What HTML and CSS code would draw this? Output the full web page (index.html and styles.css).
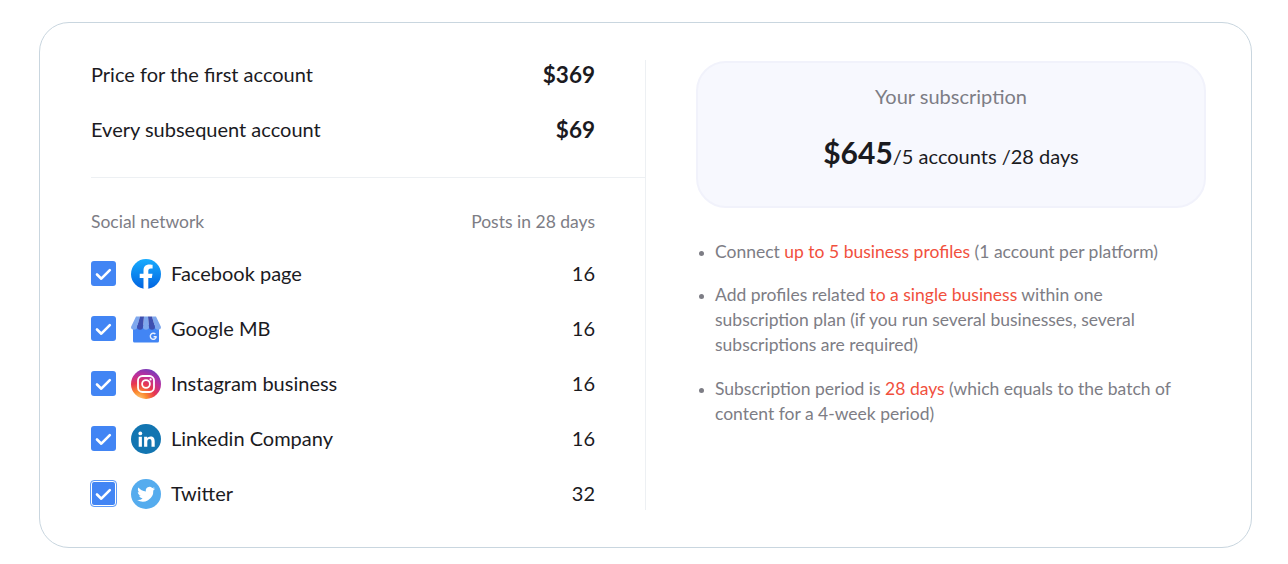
FILE: index.html
```html
<!DOCTYPE html>
<html lang="en">
<head>
<meta charset="utf-8">
<title>Subscription</title>
<link rel="stylesheet" href="styles.css">
</head>
<body>
<main class="card">
  <section class="left">
    <div class="prices">
      <div class="price-row"><span>Price for the first account</span><b>$369</b></div>
      <div class="price-row"><span>Every subsequent account</span><b>$69</b></div>
    </div>
    <div class="head-row"><span>Social network</span><span>Posts in 28 days</span></div>
    <ul class="networks">
      <li class="net">
        <span class="check"><svg viewBox="0 0 25 25"><path d="M6 13.500l4.300 4.200 8.500-8.500"/></svg></span>
        <svg class="icon" viewBox="0 0 30 30"><defs><linearGradient id="fb" x1="0" y1="0" x2="0" y2="1"><stop offset="0" stop-color="#18acfe"/><stop offset="1" stop-color="#0163e0"/></linearGradient></defs><circle cx="15" cy="15" r="15" fill="url(#fb)"/><path fill="#fff" d="M20.800 19l.7-4.300h-4.200v-2.900c0-1.200.6-2.300 2.400-2.300h1.900V5.800s-1.700-.3-3.400-.3c-3.400 0-5.700 2.100-5.700 5.800v3.400H8.700V19h3.800v10.800c.8.100 1.600.2 2.400.2s1.600-.1 2.400-.2V19z"/></svg>
        <span class="name">Facebook page</span><span class="num">16</span>
      </li>
      <li class="net">
        <span class="check"><svg viewBox="0 0 25 25"><path d="M6 13.500l4.300 4.200 8.500-8.500"/></svg></span>
        <svg class="icon" viewBox="0 0 30 30"><path fill="#4285f4" d="M2 11h26v16a1.500 1.500 0 0 1-1.500 1.500h-23A1.500 1.500 0 0 1 2 27z"/><path fill="#7fa8ee" d="M5 2.500h4L6 13a3 2.800 0 0 1-6 0zM13 2.500h4L18 13a3 2.800 0 0 1-6 0zM21 2.500h4L30 13a3 2.800 0 0 1-6 0z"/><path fill="#3e4fb0" d="M9 2.500h4L12 13a3 2.800 0 0 1-6 0zM17 2.500h4L24 13a3 2.800 0 0 1-6 0z"/><path fill="none" stroke="#e8f0fe" stroke-width="1.400" d="M25.300 22.700a3 3 0 1 1-.9-2.600M22.600 22.800h3"/></svg>
        <span class="name">Google MB</span><span class="num">16</span>
      </li>
      <li class="net">
        <span class="check"><svg viewBox="0 0 25 25"><path d="M6 13.500l4.300 4.200 8.500-8.500"/></svg></span>
        <svg class="icon" viewBox="0 0 30 30"><defs><radialGradient id="ig" cx=".25" cy="1.050" r="1.150"><stop offset="0" stop-color="#fdd58a"/><stop offset=".25" stop-color="#fb8c2f"/><stop offset=".5" stop-color="#e8374f"/><stop offset=".75" stop-color="#bb2f9e"/><stop offset="1" stop-color="#6a3fc0"/></radialGradient></defs><circle cx="15" cy="15" r="15" fill="url(#ig)"/><rect x="7" y="7" width="16" height="16" rx="4.500" fill="none" stroke="#fff" stroke-width="1.800"/><circle cx="15" cy="15" r="3.900" fill="none" stroke="#fff" stroke-width="1.800"/><circle cx="19.600" cy="10.400" r="1.100" fill="#fff"/></svg>
        <span class="name">Instagram business</span><span class="num">16</span>
      </li>
      <li class="net">
        <span class="check"><svg viewBox="0 0 25 25"><path d="M6 13.500l4.300 4.200 8.500-8.500"/></svg></span>
        <svg class="icon" viewBox="0 0 30 30"><circle cx="15" cy="15" r="15" fill="#1275b1"/><circle cx="9.300" cy="9.400" r="1.900" fill="#fff"/><path fill="#fff" d="M7.700 12.700h3.200v10.100H7.700zM13.100 12.700h3.100v1.400c.6-.9 1.700-1.700 3.300-1.700 3.100 0 4.200 1.900 4.200 5v5.400h-3.200v-4.900c0-1.500-.4-2.800-1.900-2.800s-2.300 1.200-2.300 2.800v4.900h-3.200z"/></svg>
        <span class="name">Linkedin Company</span><span class="num">16</span>
      </li>
      <li class="net">
        <span class="check focus"><svg viewBox="0 0 25 25"><path d="M6 13.500l4.300 4.200 8.500-8.500"/></svg></span>
        <svg class="icon" viewBox="0 0 30 30"><circle cx="15" cy="15" r="15" fill="#55acee"/><path fill="#fff" d="M24 9.600c-.7.300-1.400.5-2.100.6.800-.5 1.300-1.200 1.600-2-.7.400-1.500.7-2.300.9a3.700 3.700 0 0 0-6.300 3.400c-3-.2-5.700-1.600-7.500-3.900-1 1.700-.5 3.800 1.100 4.900-.6 0-1.200-.2-1.700-.5 0 1.800 1.300 3.300 3 3.700-.5.100-1.100.2-1.700.1.500 1.500 1.900 2.500 3.500 2.600a7.500 7.500 0 0 1-5.500 1.500 10.500 10.500 0 0 0 16.200-9.300c.8-.6 1.400-1.200 1.900-2z"/></svg>
        <span class="name">Twitter</span><span class="num">32</span>
      </li>
    </ul>
  </section>
  <section class="right">
    <div class="summary">
      <div class="summary-title">Your subscription</div>
      <div class="summary-price"><b>$645</b>/5 accounts /28 days</div>
    </div>
    <ul class="notes">
      <li>Connect <em>up to 5 business profiles</em> (1 account per platform)</li>
      <li>Add profiles related <em>to a single business</em> within one subscription plan (if you run several businesses, several subscriptions are required)</li>
      <li>Subscription period is <em>28 days</em> (which equals to the batch of content for a 4-week period)</li>
    </ul>
  </section>
</main>
</body>
</html>
```

FILE: styles.css
```css
* { box-sizing: border-box; }
html, body { margin: 0; padding: 0; background: #fff; }
body { font-family: Lato, sans-serif; color: #1b1b1f; height: 564px; overflow: hidden; padding: 22px 36px 0 39px; }
.card { width: 1213px; height: 526px; border: 1px solid #c9d6df; border-radius: 30px; padding: 37px 45px 37px 51px; display: flex; align-items: flex-start; }
.left { width: 555px; height: 450px; border-right: 1px solid #edf0f3; flex: none; }
.prices { height: 118px; border-bottom: 1px solid #edf0f3; padding-right: 50px; display: flex; flex-direction: column; gap: 25px; }
.price-row { display: flex; justify-content: space-between; align-items: center; height: 30px; padding-bottom: 2px; font-size: 20px; flex: none; }
.price-row b { font-size: 22.5px; font-weight: 700; }
.head-row { display: flex; justify-content: space-between; font-size: 17.5px; color: #7d7d85; margin-top: 32px; padding-right: 50px; line-height: 24px; }
.networks { list-style: none; margin: 12px 0 0; padding: 0 50px 0 0; }
.net { display: flex; align-items: center; height: 55px; font-size: 20px; }
.check { width: 25px; height: 25px; border-radius: 3px; background: #4285f4; flex: none; display: block; }
.check svg { display: block; width: 25px; height: 25px; fill: none; stroke: #fff; stroke-width: 2.600; stroke-linecap: round; stroke-linejoin: round; }
.check.focus { outline: 1px solid #5f9bf7; box-shadow: inset 0 0 0 1px #fff; }
.icon { width: 30px; height: 30px; margin-left: 15px; margin-right: 10px; flex: none; }
.name { flex: 1; padding-bottom: 2px; }
.num { padding-bottom: 2px; }
.right { flex: 1; padding-left: 50px; padding-top: 1px; }
.summary { height: 147px; background: #f7f8fe; border: 2px solid #f1f2fb; border-radius: 30px; text-align: center; padding-top: 21px; }
.summary-title { font-size: 20px; color: #7d7d85; line-height: 24px; }
.summary-price { font-size: 20px; margin-top: 25px; line-height: 38px; }
.summary-price b { font-size: 30px; font-weight: 700; }
.notes { margin: 31px 0 0; padding: 0 20px 0 19px; font-size: 17.5px; line-height: 25px; color: #7d7d85; }
.notes li { margin-bottom: 18px; }
.notes li:nth-child(2) { margin-bottom: 19px; }
.notes li::marker { font-size: 14px; }
.notes em { font-style: normal; color: #f1503d; }
```
